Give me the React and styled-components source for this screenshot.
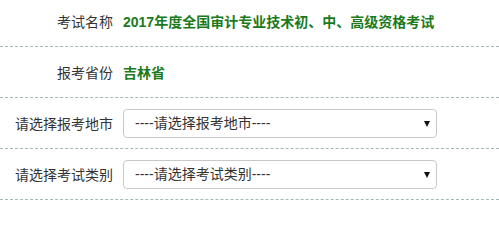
import styled, { createGlobalStyle } from 'styled-components';

const GlobalStyle = createGlobalStyle`
  html, body {
    margin: 0;
    padding: 0;
    background: #fff;
  }
  body {
    font-family: "Liberation Sans", "Noto Sans CJK SC", sans-serif;
    font-size: 14px;
    color: #333;
  }
`;

const Form = styled.div`
  width: 499px;
  margin-top: -4px;
`;

const Row = styled.div`
  display: grid;
  grid-template-columns: 113px 1fr;
  column-gap: 10px;
  align-items: center;
  height: 50px;
  border-bottom: 1px dashed #a3b9b9;
`;

const Label = styled.div`
  text-align: right;
  font-family: "Noto Sans CJK SC", sans-serif;
  font-size: 14px;
  color: #333;
  white-space: nowrap;
`;

const Value = styled.div`
  font-family: "Liberation Sans", "Noto Sans CJK SC", sans-serif;
  font-size: 14px;
  font-weight: bold;
  color: #1b7a1b;
  white-space: nowrap;
`;

const SelectWrap = styled.div`
  position: relative;
  width: 314px;
  height: 29px;
`;

const Select = styled.select`
  appearance: none;
  width: 100%;
  height: 100%;
  box-sizing: border-box;
  border: 1px solid #c8c8c8;
  border-radius: 4px;
  background: #fff;
  padding: 0 0 0 11px;
  font-family: "Liberation Sans", "Noto Sans CJK SC", sans-serif;
  font-size: 14px;
  color: #333;
  outline: none;
`;

const Arrow = styled.svg`
  position: absolute;
  right: 7px;
  top: 12px;
  pointer-events: none;
`;

const Dropdown = ({ placeholder }) => (
  <SelectWrap>
    <Select defaultValue="">
      <option value="">{placeholder}</option>
    </Select>
    <Arrow width="6" height="6" viewBox="0 0 6 6">
      <path d="M0 0 H6 L3 6 Z" fill="#111" />
    </Arrow>
  </SelectWrap>
);

export default function App() {
  return (
    <>
      <GlobalStyle />
      <Form>
        <Row>
          <Label>考试名称</Label>
          <Value>2017年度全国审计专业技术初、中、高级资格考试</Value>
        </Row>
        <Row>
          <Label>报考省份</Label>
          <Value>吉林省</Value>
        </Row>
        <Row>
          <Label>请选择报考地市</Label>
          <Dropdown placeholder="----请选择报考地市----" />
        </Row>
        <Row>
          <Label>请选择考试类别</Label>
          <Dropdown placeholder="----请选择考试类别----" />
        </Row>
      </Form>
    </>
  );
}
